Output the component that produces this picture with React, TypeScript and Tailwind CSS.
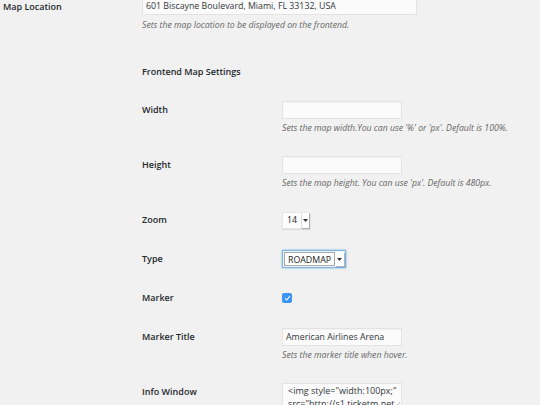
import React from 'react';

// Small helpers for the WordPress-style settings table
const Label = ({ children }: { children: React.ReactNode }) => (
  <div className="w-[140px] shrink-0 h-[18px] leading-[18px] text-[9px] font-semibold text-[#23282d]">
    {children}
  </div>
);

const Desc = ({ children }: { children: React.ReactNode }) => (
  <p className="mt-[3px] mb-[1px] leading-[12px] text-[8.7px] italic text-[#666]">{children}</p>
);

const TextInput = ({ value = '', width = 'w-[120px]' }: { value?: string; width?: string }) => (
  <div
    className={`${width} h-[18px] leading-[16px] px-[3px] border border-[#e3e3e3] bg-[#fbfbfb] text-[8.8px] text-[#32373c] shadow-[inset_0_1px_1px_rgba(0,0,0,0.04)]`}
  >
    {value}
  </div>
);

const Arrow = () => (
  <svg width="5" height="3" viewBox="0 0 5 3" className="block">
    <path d="M0 0 H5 L2.5 3 Z" fill="#333" />
  </svg>
);

const Row = ({ label, children }: { label: string; children: React.ReactNode }) => (
  <div className="flex items-start pt-[10px] pb-[11px]">
    <Label>{label}</Label>
    <div className="flex-1">{children}</div>
  </div>
);

export default function App() {
  return (
    <div className="w-[540px] h-[405px] overflow-hidden bg-[#f1f1f1] font-['Open_Sans',sans-serif]">
      <div className="-mt-[3px] pl-[3px]">
        {/* Map location */}
        <div className="flex items-start">
          <div className="w-[139px] shrink-0 h-[18px] leading-[18px] pt-[1px] text-[9px] font-semibold text-[#23282d]">
            Map Location
          </div>
          <div className="flex-1">
            <TextInput value="601 Biscayne Boulevard, Miami, FL 33132, USA" width="w-[275px]" />
            <p className="mt-[4px] leading-[12px] text-[8.7px] italic text-[#666]">
              Sets the map location to be displayed on the frontend.
            </p>
          </div>
        </div>

        {/* Nested frontend settings */}
        <div className="pl-[139px] pt-[35px]">
          <h3 className="leading-[12px] text-[9px] font-semibold text-[#23282d]">Frontend Map Settings</h3>

          <div className="pt-[13px]">
            <Row label="Width">
              <TextInput />
              <Desc>Sets the map width.You can use '%' or 'px'. Default is 100%.</Desc>
            </Row>

            <Row label="Height">
              <TextInput />
              <Desc>Sets the map height. You can use 'px'. Default is 480px.</Desc>
            </Row>

            <Row label="Zoom">
              <div className="flex h-[18px] items-center">
                <div className="flex items-stretch h-[17px] bg-[#fdfdfd] border border-[#e6e6e6] shadow-[0_1px_1px_rgba(0,0,0,0.08)]">
                  <span className="pl-[4px] pr-[4px] leading-[15px] text-[8.8px] text-[#222]">14</span>
                  <span className="w-[8px] flex items-center justify-center border-l border-[#ddd] shadow-[1px_1px_1px_rgba(0,0,0,0.25)] bg-white">
                    <Arrow />
                  </span>
                </div>
              </div>
            </Row>

            <Row label="Type">
              <div className="flex h-[18px]">
                <div className="flex items-stretch h-[18px] p-[1px] bg-[#eef5fc] border border-[#7fb3e6] shadow-[0_0_2px_rgba(30,140,190,0.6)]">
                  <span className="px-[3px] leading-[14px] border border-[#a9a9a9] bg-white text-[8.8px] text-[#222]">
                    ROADMAP
                  </span>
                  <span className="w-[9px] flex items-center justify-center bg-white shadow-[1px_1px_1px_rgba(0,0,0,0.25)]">
                    <Arrow />
                  </span>
                </div>
              </div>
            </Row>

            <Row label="Marker">
              <div className="h-[18px] flex items-center">
                <span className="w-[10px] h-[10px] rounded-[2px] bg-[#3a95f5] flex items-center justify-center">
                  <svg width="7" height="6" viewBox="0 0 7 6">
                    <path d="M1 3.2 L2.8 5 L6 1" stroke="#fff" strokeWidth="1.1" fill="none" />
                  </svg>
                </span>
              </div>
            </Row>

            <Row label="Marker Title">
              <TextInput value="American Airlines Arena" />
              <Desc>Sets the marker title when hover.</Desc>
            </Row>

            <Row label="Info Window">
              <div className="relative w-[120px] h-[26px] pl-[5px] pt-[1px] border border-[#e3e3e3] bg-[#fbfbfb] text-[9px] leading-[12.5px] text-[#32373c] whitespace-pre overflow-hidden">
                {'<img style="width:100px;"\nsrc="http://s1.ticketm.net'}
                <svg width="5" height="5" viewBox="0 0 5 5" className="absolute right-[1px] bottom-[1px]">
                  <path d="M0 5 L5 0 M2.5 5 L5 2.5" stroke="#999" strokeWidth="0.6" />
                </svg>
              </div>
            </Row>
          </div>
        </div>
      </div>
    </div>
  );
}
